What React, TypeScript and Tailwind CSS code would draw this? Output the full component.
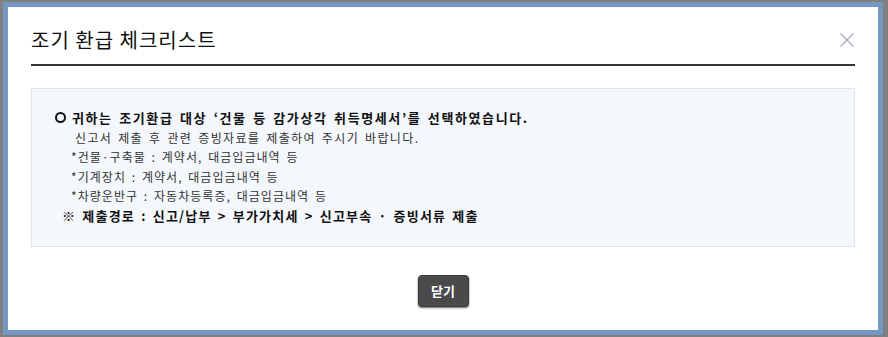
export default function App() {
  return (
    <div className="w-[888px] h-[337px] bg-[#808080] pt-[2px] pl-[3px] overflow-hidden font-['Noto_Sans_CJK_KR',sans-serif]">
      <div className="w-[880px] h-[333px] border-[5px] border-[#7598c2] bg-white px-[23px]">
        {/* header */}
        <div className="flex items-center justify-between pt-[20px] pb-[11px] border-b-2 border-[#333333]">
          <h1 className="text-[20px] leading-[26px] text-[#111111] tracking-[1px]">조기 환급 체크리스트</h1>
          <button type="button" className="mr-[1px] w-[14px] h-[14px] flex items-center justify-center">
            <svg width="14" height="14" viewBox="0 0 14 14">
              <path d="M0.5 0.5 L13.5 13.5 M13.5 0.5 L0.5 13.5" stroke="#a7abbd" strokeWidth="1.3" fill="none" />
            </svg>
          </button>
        </div>

        {/* info box */}
        <div className="mt-[22px] border border-[#dfe5ee] bg-[#f4f7fc] pt-[19px] pb-[20px] text-[12px] leading-[19.6px] text-[#333333] tracking-[1.05px] [word-spacing:2px]">
          <p className="pl-[23px] flex items-center text-[13px] font-bold text-[#111111] tracking-[1.6px]">
            <span className="inline-block w-[11px] h-[11px] rounded-full border-2 border-[#111111] mr-[6px]" />
            귀하는 조기환급 대상 ‘건물 등 감가상각 취득명세서’를 선택하였습니다.
          </p>
          <p className="pl-[43px] tracking-[1.35px]">신고서 제출 후 관련 증빙자료를 제출하여 주시기 바랍니다.</p>
          <p className="pl-[39px]">*건물·구축물 : 계약서, 대금입금내역 등</p>
          <p className="pl-[39px]">*기계장치 : 계약서, 대금입금내역 등</p>
          <p className="pl-[39px]">*차량운반구 : 자동차등록증, 대금입금내역 등</p>
          <p className="pl-[30px] text-[13px] font-bold text-[#111111] tracking-[1.2px]">※ 제출경로 : 신고/납부 &gt; 부가가치세 &gt; 신고부속 · 증빙서류 제출</p>
        </div>

        {/* footer */}
        <div className="flex justify-center mt-[28px]">
          <button
            type="button"
            className="w-[51px] h-[32px] rounded-[4px] bg-[#4a4a4a] text-white text-[13px] font-bold shadow-[0_1px_2px_rgba(0,0,0,0.6)] border border-[#3a3a3a]"
          >
            닫기
          </button>
        </div>
      </div>
    </div>
  );
}
